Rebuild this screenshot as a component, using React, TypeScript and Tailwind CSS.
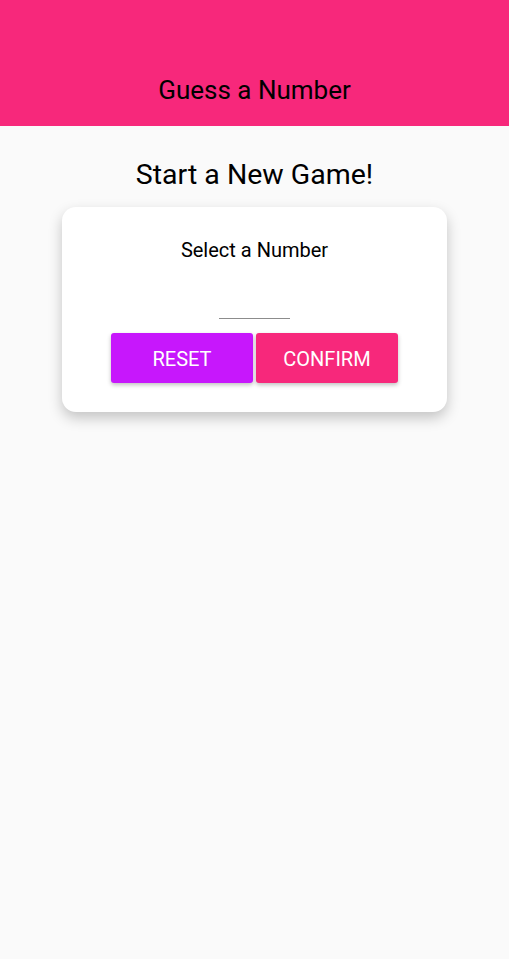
export default function App() {
  return (
    <div
      className="flex min-h-[959px] flex-col bg-[#fafafa]"
      style={{ fontFamily: "Roboto, 'Liberation Sans', sans-serif" }}
    >
      {/* Header */}
      <header className="flex h-[126px] items-end justify-center bg-[#f7287b] pb-[23px]">
        <h1 className="text-[26px] leading-none text-black">Guess a Number</h1>
      </header>

      <main className="flex flex-col items-center px-[62px] pt-[33px]">
        <h2 className="text-[28.5px] leading-[32px] text-black">Start a New Game!</h2>

        {/* Card */}
        <div className="mt-[16px] flex w-[385px] flex-col items-center rounded-[14px] bg-white pb-[29px] pt-[31px] shadow-[0_6px_14px_rgba(0,0,0,0.22)]">
          <p className="text-[20px] leading-[24px] text-black">Select a Number</p>
          <div className="mt-[33px] h-[24px] w-[71px] border-b border-[#8c8c8c]" />
          <div className="mt-[14px] flex gap-[3px]">
            <button className="h-[50px] w-[142px] rounded-[3px] bg-[#c717fc] pt-[2px] text-[20px] text-white shadow-[0_2px_4px_rgba(0,0,0,0.25)]">
              RESET
            </button>
            <button className="h-[50px] w-[142px] rounded-[3px] bg-[#f7287b] pt-[2px] text-[20px] text-white shadow-[0_2px_4px_rgba(0,0,0,0.25)]">
              CONFIRM
            </button>
          </div>
        </div>
      </main>
    </div>
  );
}
